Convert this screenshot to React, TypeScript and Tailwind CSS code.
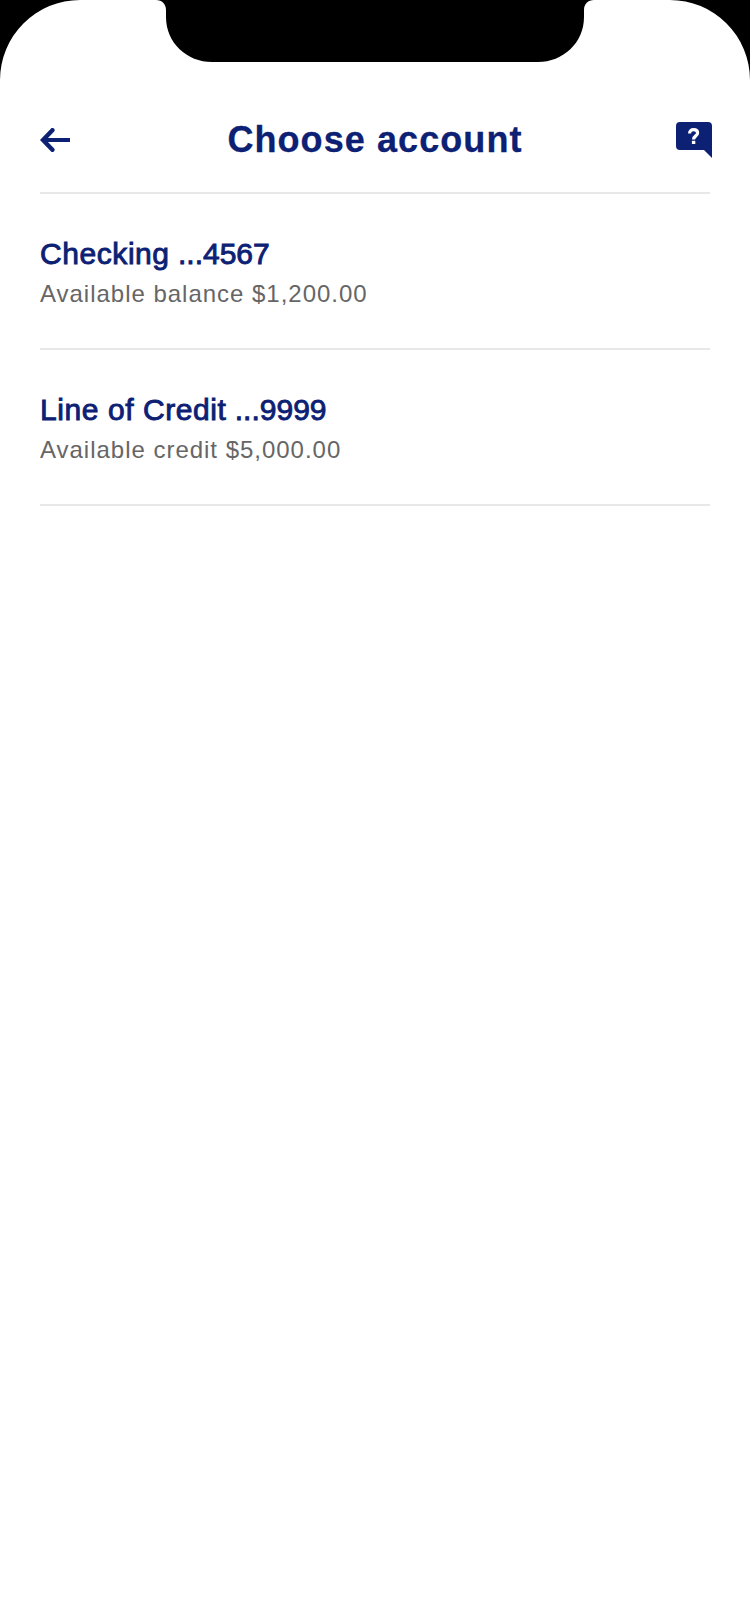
type Account = { name: string; mask: string; detail: string };

const accounts: Account[] = [
  { name: "Checking", mask: "...4567", detail: "Available balance $1,200.00" },
  { name: "Line of Credit", mask: "...9999", detail: "Available credit $5,000.00" },
];

function DeviceFrame() {
  return (
    <svg className="absolute left-0 top-0" width="750" height="80" viewBox="0 0 750 80" aria-hidden="true">
      <path d="M0 0H80A80 80 0 0 0 0 80Z" />
      <path d="M750 0H670A80 80 0 0 1 750 80Z" />
      <path d="M156 0C162 0 166 4 166 10V17C166 43 187 62 212 62H538C563 62 584 43 584 17V10C584 4 588 0 594 0Z" />
    </svg>
  );
}

function BackArrow() {
  return (
    <svg width="30" height="24" viewBox="0 0 30 24" fill="none" stroke="#0c2074" strokeWidth="4" aria-hidden="true">
      <path d="M3 12H30" />
      <path d="M12.4 2.2L3 12L12.4 21.8" strokeWidth="4.4" strokeLinecap="round" />
    </svg>
  );
}

function HelpBubble() {
  return (
    <svg width="36" height="36" viewBox="0 0 36 36" aria-hidden="true">
      <path d="M4 0H32Q36 0 36 4V36L28 28H4Q0 28 0 24V4Q0 0 4 0Z" fill="#0c2074" />
      <path
        d="M13.6 11.4C13.6 9 15.2 7.6 17.6 7.6C20 7.6 21.6 9 21.6 11C21.6 14 17.6 13.8 17.6 17.4"
        fill="none"
        stroke="#fff"
        strokeWidth="3.2"
      />
      <rect x="15.9" y="18.8" width="3.4" height="3.2" fill="#fff" />
    </svg>
  );
}

export default function App() {
  return (
    <main className="relative h-[1624px] w-[750px] overflow-hidden bg-white px-10 pt-[88px] font-['Liberation_Sans',Arial,sans-serif]">
      <DeviceFrame />
      <header className="grid h-[106px] grid-cols-[36px_1fr_36px] items-center border-b-2 border-[#e8e8e8]">
        <button aria-label="Back">
          <BackArrow />
        </button>
        <h1 className="text-center text-[36px] leading-[44px] font-bold tracking-[1.08px] whitespace-nowrap text-[#0c2074] [-webkit-text-stroke:0.3px_#0c2074]">
          Choose account
        </h1>
        <button aria-label="Help" className="ml-0.5">
          <HelpBubble />
        </button>
      </header>
      <ul>
        {accounts.map((account) => (
          <li key={account.name} className="h-[156px] border-b-2 border-[#e8e8e8] pt-10">
            <p className="text-[30px] leading-10 text-[#0c2074] [-webkit-text-stroke:0.9px_#0c2074]">
              <span className="tracking-[0.57px]">{account.name}</span> {account.mask}
            </p>
            <p className="mt-1 text-2xl leading-8 tracking-[0.98px] text-[#666666]">{account.detail}</p>
          </li>
        ))}
      </ul>
    </main>
  );
}
